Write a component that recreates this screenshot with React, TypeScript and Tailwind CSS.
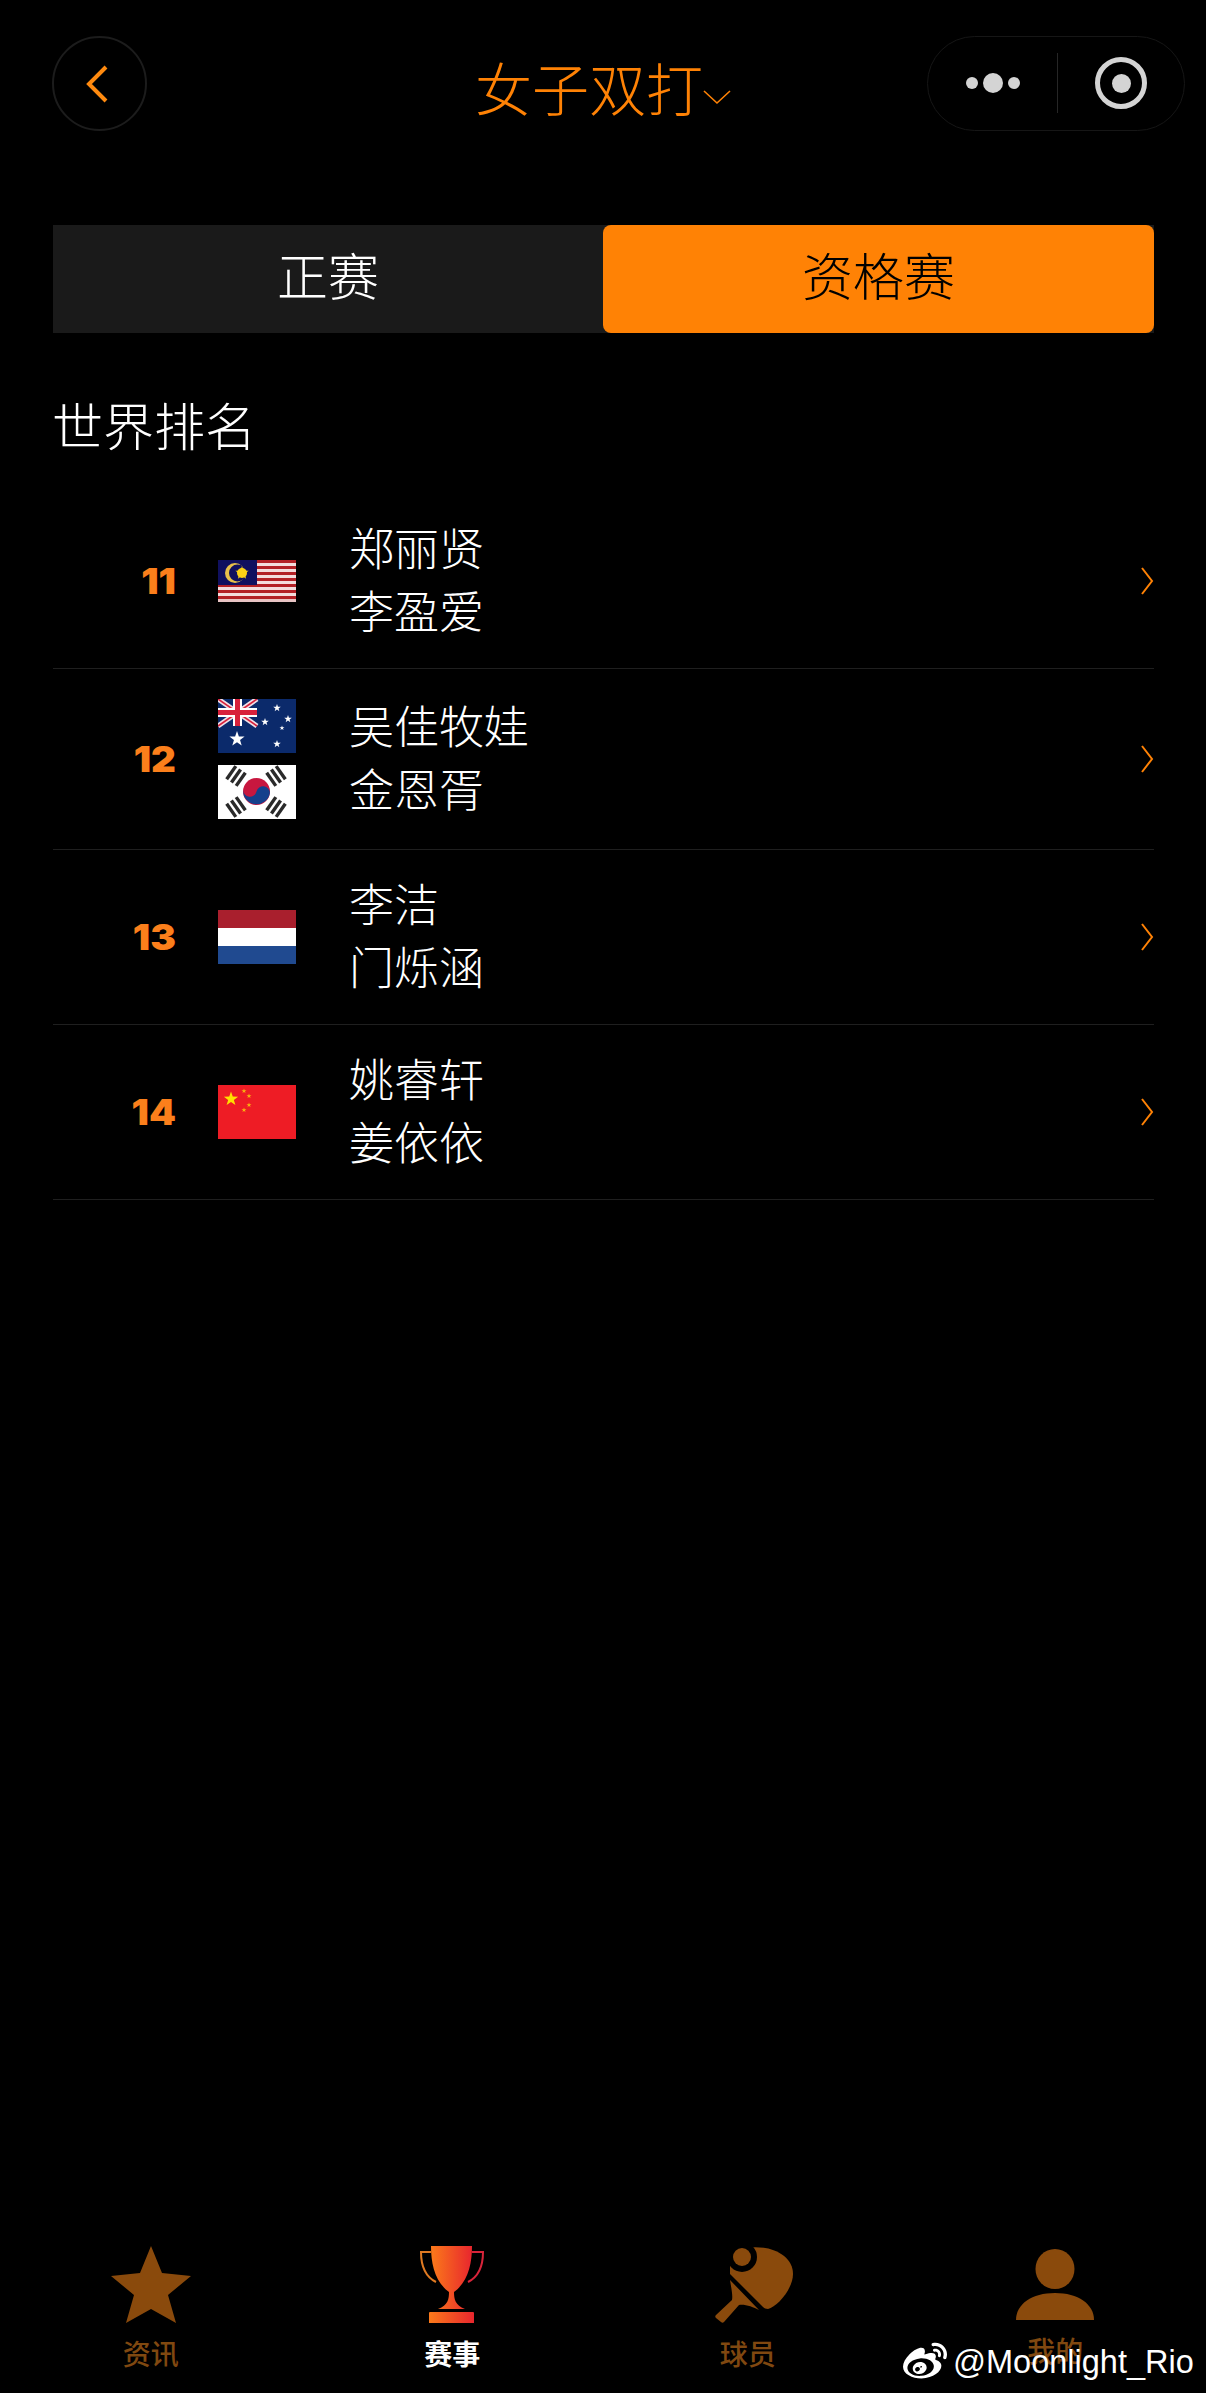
import { FaWeibo } from "react-icons/fa";
import type { ReactNode } from "react";

const cjk = "font-['Noto_Sans_CJK_SC',sans-serif]";

const star = (cx: number, cy: number, r: number) => {
  const pts: string[] = [];
  for (let i = 0; i < 10; i++) {
    const rad = i % 2 === 0 ? r : r * 0.4;
    const a = (Math.PI / 5) * i - Math.PI / 2;
    pts.push(`${(cx + rad * Math.cos(a)).toFixed(2)},${(cy + rad * Math.sin(a)).toFixed(2)}`);
  }
  return pts.join(" ");
};

const Malaysia = () => (
  <svg width="78" height="42" viewBox="0 0 78 42" className="block">
    <rect width="78" height="42" fill="#f3dcdc" />
    {[0, 6, 12, 18, 24, 30, 36].map((y) => (
      <rect key={y} y={y} width="78" height="3" fill="#b32025" />
    ))}
    <rect y="39" width="78" height="3" fill="#e8c4c4" />
    <rect width="39" height="25" fill="#10105f" />
    <circle cx="17" cy="13" r="10" fill="#e8c04a" />
    <circle cx="19.5" cy="13" r="8.5" fill="#10105f" />
    <circle cx="24" cy="13" r="5" fill="#fcd116" />
    <polygon points={star(24, 13, 7)} fill="#fcd116" />
  </svg>
);

const Australia = () => (
  <svg width="78" height="54" viewBox="0 0 78 54" className="block">
    <rect width="78" height="54" fill="#0b2a6b" />
    <g stroke="#f1dfe6" strokeWidth="5">
      <line x1="0" y1="0" x2="39" y2="27" />
      <line x1="39" y1="0" x2="0" y2="27" />
    </g>
    <g stroke="#d8213b" strokeWidth="1.6">
      <line x1="0" y1="0" x2="39" y2="27" />
      <line x1="39" y1="0" x2="0" y2="27" />
    </g>
    <rect x="15" width="9" height="27" fill="#fff" />
    <rect y="9" width="39" height="9" fill="#fff" />
    <rect x="17" width="5" height="27" fill="#d8213b" />
    <rect y="11" width="39" height="5" fill="#d8213b" />
    <polygon points={star(19, 40, 8)} fill="#fff" />
    <polygon points={star(59, 9, 4)} fill="#fff" />
    <polygon points={star(47, 23, 4)} fill="#fff" />
    <polygon points={star(70, 20, 4)} fill="#fff" />
    <polygon points={star(64, 29, 2.6)} fill="#fff" />
    <polygon points={star(59, 45, 4)} fill="#fff" />
  </svg>
);

const Trigram = ({ x, y, rot }: { x: number; y: number; rot: number }) => (
  <g transform={`translate(${x} ${y}) rotate(${rot})`} fill="#2a2a2a">
    <rect x="-8" y="-7.5" width="16" height="3.4" />
    <rect x="-8" y="-1.7" width="16" height="3.4" />
    <rect x="-8" y="4.1" width="16" height="3.4" />
  </g>
);

const Korea = () => (
  <svg width="78" height="54" viewBox="0 0 78 54" className="block">
    <rect width="78" height="54" fill="#fff" />
    <circle cx="38.5" cy="26.5" r="13.5" fill="#c8173f" />
    <path d="M25.1 25a6.8 6.8 0 0 0 13.4 1.5a6.8 6.8 0 0 1 13.4 1.5A13.5 13.5 0 0 1 25.1 25z" fill="#15408c" />
    <Trigram x={18} y={11} rot={-55} />
    <Trigram x={58} y={11} rot={55} />
    <Trigram x={18} y={42} rot={55} />
    <Trigram x={58} y={42} rot={-55} />
  </svg>
);

const Netherlands = () => (
  <div className="w-[78px] h-[54px] flex flex-col">
    <div className="flex-1 bg-[#a91f2d]" />
    <div className="flex-1 bg-white" />
    <div className="flex-1 bg-[#204a90]" />
  </div>
);

const China = () => (
  <svg width="78" height="54" viewBox="0 0 78 54" className="block">
    <rect width="78" height="54" fill="#ee1c25" />
    <polygon points={star(13, 14, 7.5)} fill="#ffe000" />
    <polygon points={star(26, 6, 2.6)} fill="#f9b30f" />
    <polygon points={star(31, 11, 2.6)} fill="#f9b30f" />
    <polygon points={star(31, 20, 2.6)} fill="#f9b30f" />
    <polygon points={star(26, 25, 2.6)} fill="#f9b30f" />
  </svg>
);

const rows: { rank: number; flags: ReactNode[]; names: string[] }[] = [
  { rank: 11, flags: [<Malaysia key="my" />], names: ["郑丽贤", "李盈爱"] },
  { rank: 12, flags: [<Australia key="au" />, <Korea key="kr" />], names: ["吴佳牧娃", "金恩胥"] },
  { rank: 13, flags: [<Netherlands key="nl" />], names: ["李洁", "门烁涵"] },
  { rank: 14, flags: [<China key="cn" />], names: ["姚睿轩", "姜依依"] },
];

const Row = ({ rank, flags, names }: { rank: number; flags: ReactNode[]; names: string[] }) => (
  <div className="flex items-center min-h-[175px] border-b border-[#1f1f1f]">
    <div className="w-[123px] text-right font-['Inter',sans-serif] font-black text-[35px] leading-none text-[#fb7f1b] [transform:scaleX(1.1)] origin-right">
      {rank}
    </div>
    <div className={`w-[78px] ml-[42px] flex flex-col gap-3 ${flags.length > 1 ? "py-[30px]" : ""}`}>{flags}</div>
    <div className={`ml-[53px] flex-1 pb-[7px] text-[45px] leading-[63px] text-white font-light ${cjk}`}>
      {names.map((n) => (
        <div key={n}>{n}</div>
      ))}
    </div>
    <svg width="14" height="30" viewBox="0 0 14 30" fill="none" stroke="#ff8205" strokeWidth="2">
      <polyline points="2,2 12,15 2,28" />
    </svg>
  </div>
);

const dim = "#8a4a0c";

const NavItem = ({
  icon,
  label,
  active,
  labelClass = "",
}: {
  icon: ReactNode;
  label: string;
  active?: boolean;
  labelClass?: string;
}) => (
  <div className="flex flex-col items-center">
    <div className="h-[78px] flex items-center justify-center">{icon}</div>
    <div
      className={`mt-[15px] text-[28px] leading-[28px] ${cjk} ${
        active ? "text-white font-bold" : "text-[#804810] font-medium"
      } ${labelClass}`}
    >
      {label}
    </div>
  </div>
);

export default function App() {
  return (
    <div className={`relative w-[1206px] h-[2393px] bg-black overflow-hidden flex flex-col ${cjk}`}>
      {/* top bar */}
      <div className="flex items-center pt-[35px] pl-[52px] pr-[21px]">
        <div className="mt-[1px] w-[95px] h-[95px] rounded-full border-2 border-[#1c1c1c] flex items-center justify-center">
          <svg width="26" height="40" viewBox="0 0 26 40" fill="none" stroke="#ff8a0f" strokeWidth="4" className="-ml-[6px]">
            <polyline points="22,3 5,20 22,37" />
          </svg>
        </div>
        <div className="ml-[328px] flex items-end pt-[6px] text-[#ff8205]">
          <span className="text-[57px] leading-[70px] font-light">女子双打</span>
          <svg width="28" height="16" viewBox="0 0 28 16" fill="none" stroke="#ff8205" strokeWidth="1.6" className="mb-[16px]">
            <polyline points="1,2 14,14 27,2" />
          </svg>
        </div>
        <div className="ml-auto w-[258px] h-[95px] rounded-full border border-[#161616] flex items-center">
          <div className="w-[129px] flex items-center justify-center gap-[5px]">
            <span className="w-3 h-3 rounded-full bg-[#d4d4d4]" />
            <span className="w-5 h-5 rounded-full bg-[#d4d4d4]" />
            <span className="w-3 h-3 rounded-full bg-[#d4d4d4]" />
          </div>
          <div className="w-px h-[60px] bg-[#262626]" />
          <div className="flex-1 flex items-center justify-center">
            <div className="w-[52px] h-[52px] rounded-full border-[5px] border-[#d4d4d4] flex items-center justify-center">
              <span className="w-[19px] h-[19px] rounded-full bg-[#d4d4d4]" />
            </div>
          </div>
        </div>
      </div>

      {/* tabs */}
      <div className="mt-[94px] ml-[53px] mr-[52px] flex h-[108px] bg-[#1a1a1a] text-[51px]">
        <div className="w-[550px] flex items-center justify-center pb-[10px] text-white font-light">正赛</div>
        <div className="flex-1 flex items-center justify-center pb-[10px] bg-[#ff8205] rounded-lg text-black font-light">
          资格赛
        </div>
      </div>

      <div className="mt-[56px] ml-[52px] text-[51px] leading-[70px] text-white font-light">世界排名</div>

      <div className="mt-[35px] ml-[53px] mr-[52px]">
        {rows.map((r) => (
          <Row key={r.rank} {...r} />
        ))}
      </div>

      {/* tab bar */}
      <div className="mt-auto grid grid-cols-4 pb-[26px]">
        <NavItem
          label="资讯"
          icon={
            <svg width="82" height="78" viewBox="0 0 82 78">
              <polygon points="41,0 52,27 81,30 58,49 66,77 41,63 16,77 24,49 1,30 30,27" fill={dim} />
            </svg>
          }
        />
        <NavItem
          active
          label="赛事"
          icon={
            <svg width="66" height="78" viewBox="0 0 66 78">
              <defs>
                <linearGradient id="cup" x1="0" x2="1" y1="0" y2="0">
                  <stop offset="0" stopColor="#fb7a1a" />
                  <stop offset="1" stopColor="#e8262e" />
                </linearGradient>
              </defs>
              <path d="M12 6H2c0 14 5 25 15 30" fill="none" stroke="#e07a22" strokeWidth="2" />
              <path d="M53 6h11c0 14-5 25-15 30" fill="none" stroke="#d8243a" strokeWidth="2" />
              <path
                d="M12 0h41c0 18-4 36-18 46c0 7 1 13 11 17H19c10-4 11-10 11-17C16 36 12 18 12 0z"
                fill="url(#cup)"
              />
              <path d="M11 66h43a1 1 0 0 1 1 1v10H10V67a1 1 0 0 1 1-1z" fill="url(#cup)" />
            </svg>
          }
        />
        <NavItem
          label="球员"
          labelClass="-translate-x-[6px]"
          icon={
            <svg width="78" height="76" viewBox="0 0 78 76">
              <path
                d="M30 1C55-3 78 8 78 27C78 42 62 60 53 62C51 62 49 61 48 60L15 27L15 15z"
                fill={dim}
              />
              <circle cx="27" cy="10" r="15" fill="#000" />
              <circle cx="27" cy="10" r="9" fill={dim} />
              <path
                d="M15 33C16 40 18 48 17 53L1 68C0 69 0 70 1 71L6 75C7 76 8 76 9 75L24 58C30 57 38 60 44 63z"
                fill={dim}
              />
            </svg>
          }
        />
        <NavItem
          label="我的"
          labelClass="-translate-y-[3px]"
          icon={
            <svg width="78" height="72" viewBox="0 0 78 72">
              <ellipse cx="39" cy="20" rx="19.5" ry="20" fill={dim} />
              <path d="M0 71C0 55 16 44 39 44s39 11 39 27z" fill={dim} />
            </svg>
          }
        />
      </div>

      {/* watermark */}
      <div className="absolute left-[903px] top-[2340px] flex items-center gap-[6px] text-white">
        <FaWeibo size={44} />
        <span className="font-['Liberation_Sans',sans-serif] text-[32.5px] leading-[44px]">@Moonlight_Rio</span>
      </div>
    </div>
  );
}
